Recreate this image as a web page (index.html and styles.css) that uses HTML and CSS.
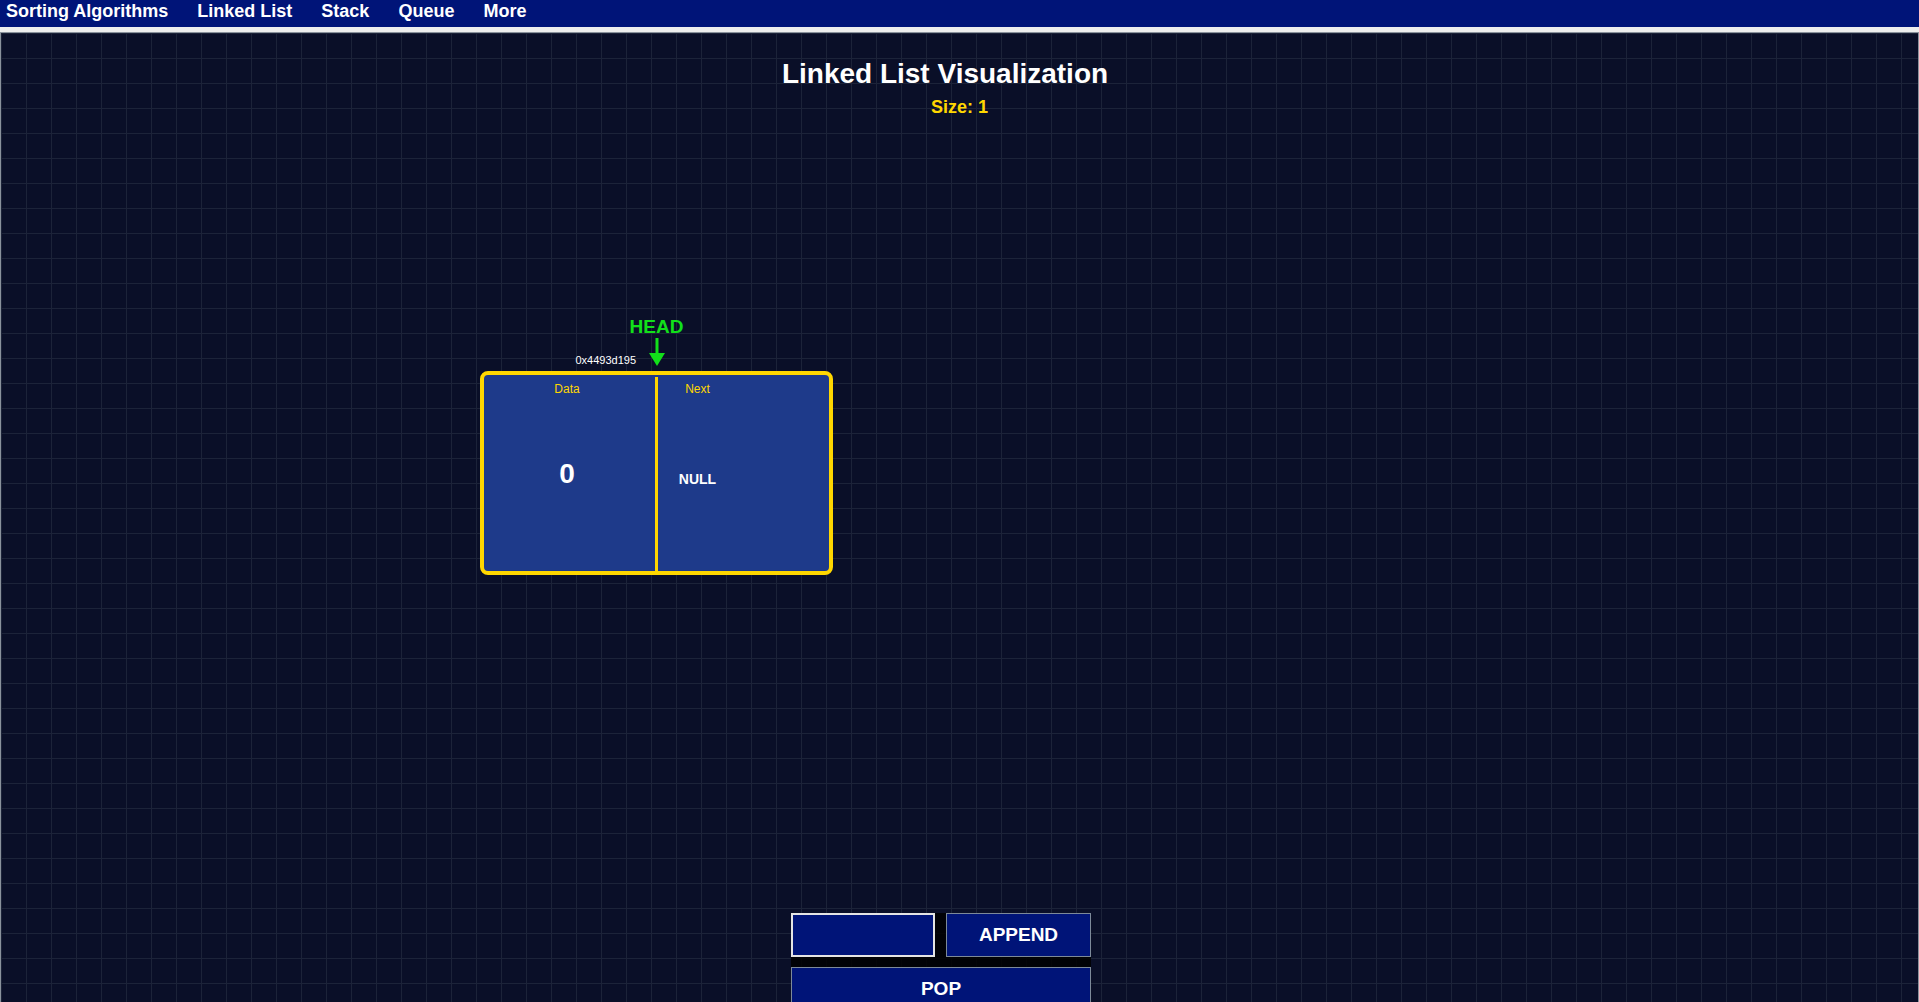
FILE: index.html
```html
<!DOCTYPE html>
<html lang="en">
<head>
<meta charset="utf-8">
<title>Linked List Visualization</title>
<link rel="stylesheet" href="styles.css">
</head>
<body>
<nav class="nav">
  <a href="#">Sorting Algorithms</a>
  <a href="#">Linked List</a>
  <a href="#">Stack</a>
  <a href="#">Queue</a>
  <a href="#">More</a>
</nav>
<main class="main">
  <h1 class="title">Linked List Visualization</h1>
  <div class="size">Size: 1</div>
  <div class="canvas">
    <div class="node">
      <div class="head-marker">
        <span class="head-label">HEAD</span>
        <svg class="head-arrow" width="16" height="28" viewBox="0 0 16 28">
          <rect x="6.5" y="0" width="3" height="16" fill="#12e01a"/>
          <polygon points="0,15 16,15 8,28" fill="#12e01a"/>
        </svg>
      </div>
      <div class="address">0x4493d195</div>
      <div class="cell cell-data">
        <div class="cell-label">Data</div>
        <div class="data-value">0</div>
      </div>
      <div class="divider"></div>
      <div class="cell cell-next">
        <div class="cell-label">Next</div>
        <div class="next-value">NULL</div>
      </div>
    </div>
  </div>
  <div class="controls">
    <input class="value-input" type="text">
    <button class="btn">APPEND</button>
    <button class="btn btn-wide">POP</button>
  </div>
</main>
</body>
</html>
```
FILE: styles.css
```css
html, body {
  margin: 0;
  padding: 0;
  overflow: hidden;
  background: #eeeeee;
  font-family: "Liberation Sans", Arial, sans-serif;
}

.nav {
  background: #001478;
  display: flex;
  gap: 29px;
  padding: 1px 0 5px 6px;
}

.nav a {
  color: #ffffff;
  font-weight: bold;
  font-size: 18px;
  line-height: 21px;
  text-decoration: none;
}

.main {
  margin-top: 5px;
  border: 1px solid #8a929c;
  background-color: #0a0f28;
  background-image:
    linear-gradient(to right, #1c2339 1px, transparent 1px),
    linear-gradient(to bottom, #1c2339 1px, transparent 1px);
  background-size: 25px 25px;
  display: flex;
  flex-direction: column;
  height: 1100px;
}

.title {
  margin: 25px 0 0;
  padding-right: 29px;
  font-size: 28px;
  line-height: 32px;
  font-weight: bold;
  color: #ffffff;
  text-align: center;
}

.size {
  margin-top: 7px;
  font-size: 18px;
  line-height: 21px;
  font-weight: bold;
  color: #ffd700;
  text-align: center;
}

.canvas {
  position: relative;
  height: 795px;
  flex: none;
}

.node {
  position: absolute;
  left: 479px;
  top: 253px;
  width: 345px;
  height: 196px;
  border: 4px solid #ffd700;
  border-radius: 8px;
  background: #1e3a8a;
  display: flex;
}

.head-marker {
  position: absolute;
  top: -60px;
  left: 0;
  right: 0;
  display: flex;
  flex-direction: column;
  align-items: center;
}

.head-label {
  color: #12e01a;
  font-weight: bold;
  font-size: 19px;
  line-height: 23px;
}

.head-arrow {
  display: block;
}

.address {
  position: absolute;
  top: -21px;
  right: 193px;
  color: #ffffff;
  font-size: 11px;
  line-height: 13px;
  white-space: nowrap;
}

.cell {
  display: flex;
  flex-direction: column;
  align-items: center;
}

.cell-data {
  box-sizing: border-box;
  width: 171px;
  padding-right: 5px;
}

.cell-next {
  width: 79px;
}

.cell-label {
  padding-top: 7px;
  font-size: 12px;
  line-height: 14px;
  color: #ffd700;
}

.data-value {
  margin-top: 62px;
  font-size: 28px;
  line-height: 32px;
  font-weight: bold;
  color: #ffffff;
}

.next-value {
  margin-top: 75px;
  font-size: 14px;
  line-height: 16px;
  font-weight: bold;
  color: #ffffff;
}

.divider {
  width: 3px;
  margin-top: 2px;
  background: #ffd700;
}

.controls {
  margin-left: 790px;
  width: 300px;
  background: rgba(0, 0, 0, 0.85);
  display: grid;
  grid-template-columns: 144px 145px;
  column-gap: 11px;
  row-gap: 10px;
}

.value-input {
  box-sizing: border-box;
  height: 44px;
  margin: 0;
  border: 2px solid #e4e4e4;
  background: #001478;
  color: #ffffff;
  font-family: "Liberation Sans", Arial, sans-serif;
  font-size: 16px;
  padding: 0 6px;
  outline: none;
}

.btn {
  box-sizing: border-box;
  height: 44px;
  margin: 0;
  border: 1px solid #7d8a99;
  background: #001478;
  color: #ffffff;
  font-family: "Liberation Sans", Arial, sans-serif;
  font-size: 19px;
  font-weight: bold;
  padding: 0;
}

.btn-wide {
  grid-column: 1 / span 2;
}
```
